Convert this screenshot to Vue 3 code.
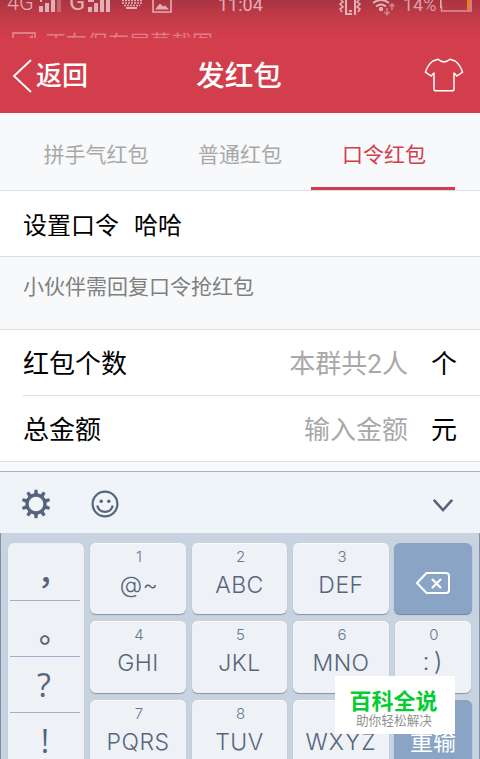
<script setup>
const tabs = ['拼手气红包', '普通红包', '口令红包']
const punctuation = ['，', '。', '?', '!']
const keys = [
  { n: '1', t: '@~', c: 'at' },
  { n: '2', t: 'ABC' },
  { n: '3', t: 'DEF' },
  { icon: true, c: 'blue' },
  { n: '4', t: 'GHI' },
  { n: '5', t: 'JKL' },
  { n: '6', t: 'MNO' },
  { n: '0', t: ':)', c: 'smile' },
  { n: '7', t: 'PQRS' },
  { n: '8', t: 'TUV' },
  { n: '9', t: 'WXYZ', c: 'wide' },
  { t: '重输', c: 'blue redo' },
]
const teeth = Array.from({ length: 10 }, (_, i) => i * 36)
</script>

<template>
  <div class="screen">
    <header class="top">
      <div class="status">
        <span class="st net">4G</span>
        <svg class="overlay" width="480" height="16" viewBox="0 0 480 16">
          <g fill="#e2afb5">
            <path d="M39 6h4v6h-4zM45 3h4v9h-4zM51 0h4v12h-4zM40 0h2v2h-2z" />
            <path d="M57 0h4v12h-4z" opacity=".4" />
            <path d="M88 10h4v2h-4zM94 3h4v9h-4zM100 0h4v12h-4zM106 0h4v12h-4zM88 7h4v5h-4zM88 0h6v2h-6z" />
            <path d="M126 7h11v2h-11z" />
            <path d="M155 9.500l5-6 3 3 2-1 4 4z" />
          </g>
          <path d="M122 .5h20M122 3h20M124 5.500h16" stroke="#e2afb5" stroke-width="1.500" stroke-dasharray="2 1" />
          <path d="M153 -3h18v15h-18z" fill="none" stroke="#e2afb5" stroke-width="1.6" />
          <g fill="none" stroke="#e2afb5" stroke-width="2">
            <path d="M346 0v14h6M355 15V0M349 11h3" />
            <path d="M341 0l2 2-3 2 3 3-3 2 2 3M359 0l-2 2 3 2-3 3 3 2-2 3" stroke-width="1.6" />
            <path d="M373 3q8-6 16 0M376 6.500q5-4 10 0" />
          </g>
          <circle cx="381" cy="9" r="2.2" fill="#e2afb5" />
          <path d="M387 8v6M384.500 12l2.500 2.500 2.500-2.500M392 10V4M389.500 6.500L392 4l2.500 2.500" fill="none" stroke="#d58089" stroke-width="1.6" />
          <path d="M441.500 6v5h29.500V0" fill="none" stroke="#d8929a" stroke-width="1.6" />
          <path d="M440.800 0v8" stroke="#e2afb5" stroke-width="1.600" />
          <path d="M467 0h3.200v10h-3.200z" fill="#e57f2e" />
        </svg>
        <span class="st g">G</span>
        <span class="st time">11:04</span>
        <span class="st pct">14%</span>
      </div>
      <div class="notice">
        <svg width="25" height="22" viewBox="0 0 25 22">
          <path d="M1 20V1h22V20M16 7.500l4-3v5" fill="none" stroke="#e07e88" stroke-width="1.8" />
        </svg>
        <span>正在保存屏幕截图</span>
      </div>
      <nav class="bar">
        <div class="back">
          <svg width="22" height="36" viewBox="0 0 22 36">
            <path d="M20 2L3 18l17 16" fill="none" stroke="#fff" stroke-width="1.9" />
          </svg>
          <span>返回</span>
        </div>
        <h1>发红包</h1>
        <svg class="shirt" width="40" height="36" viewBox="0 0 40 36">
          <path d="M14 2.2Q20 7.5 26 2.2L31 4Q36 7.5 38.6 15.2L33 19l-3-3v16q0 1.8-2 1.8H12q-2 0-2-1.8V16l-3 3-5.600-3.800Q4 7.500 9 4Z" fill="none" stroke="#fff" stroke-width="1.5" stroke-linejoin="round" />
        </svg>
      </nav>
    </header>

    <div class="tabs">
      <div v-for="(t, i) in tabs" :key="t" class="tab" :class="{ active: i === 2 }"><span>{{ t }}</span></div>
    </div>
    <div class="row code"><span>设置口令</span><span>哈哈</span></div>
    <div class="hint">小伙伴需回复口令抢红包</div>
    <div class="group">
      <div class="row"><span>红包个数</span><span class="ph">本群共2人</span><span>个</span></div>
      <div class="row"><span>总金额</span><span class="ph">输入金额</span><span>元</span></div>
    </div>

    <section class="keyboard">
      <div class="tools">
        <svg width="30" height="30" viewBox="-15 -15 30 30">
          <circle r="9" fill="none" stroke="#56657d" stroke-width="3.400" />
          <path v-for="a in teeth" :key="a" d="M-2-10L-1.500-14.300H1.500L2-10Z" fill="#56657d" :transform="`rotate(${a})`" />
        </svg>
        <svg class="face" width="28" height="28" viewBox="0 0 28 28">
          <g fill="none" stroke="#56657d" stroke-width="2.200">
            <circle cx="14" cy="14" r="12.400" />
            <path d="M6.300 15.500c1.500 8.500 13.900 8.500 15.400 0" />
          </g>
          <circle cx="10.200" cy="11.300" r="1.700" fill="#56657d" /><circle cx="17.800" cy="11.300" r="1.700" fill="#56657d" />
        </svg>
        <svg class="down" width="22" height="15" viewBox="0 0 22 15">
          <path d="M1.800 1.800L11 12l9.200-10.200" fill="none" stroke="#56657d" stroke-width="2.600" />
        </svg>
      </div>
      <div class="pad">
        <div class="punct">
          <div v-for="(p, i) in punctuation" :key="p" :class="'p' + i"><span>{{ p }}</span></div>
        </div>
        <div class="keys">
          <div v-for="(k, i) in keys" :key="i" class="key" :class="k.c">
            <small v-if="k.n">{{ k.n }}</small>
            <b v-if="k.t">{{ k.t }}</b>
            <svg v-if="k.icon" width="36" height="24" viewBox="0 0 36 24">
              <path d="M2 12L11.500 2H31q3 0 3 3v14q0 3-3 3H11.500Z" fill="none" stroke="#fff" stroke-width="2" stroke-linejoin="round" />
              <path d="M17 8l9 9M26 8l-9 9" stroke="#fff" stroke-width="2.200" />
            </svg>
          </div>
        </div>
      </div>
    </section>

    <aside class="mark"><strong>百科全说</strong><span>助你轻松解决</span></aside>
  </div>
</template>

<style>
body {
  margin: 0;
  overflow: hidden;
}
</style>

<style scoped>
.screen {
  position: relative;
  width: 480px;
  height: 759px;
  overflow: hidden;
  display: flex;
  flex-direction: column;
  background: #f8f9fb;
  color: #000;
  font-family: Roboto, "Noto Sans CJK SC", sans-serif;
}
.screen > * { flex-shrink: 0; }
svg { display: block; flex: none; }
.top {
  height: 113px;
  background: linear-gradient(#a93441 0, #c03a47 15px, #d23e4b 36px);
}
.status { position: relative; height: 31px; }
.overlay { position: absolute; left: 0; top: 0; }
.st {
  position: absolute;
  font-size: 18px;
  line-height: 20px;
  color: #e2afb5;
  white-space: nowrap;
}
.net { left: 7px; top: -7px; font-size: 21.500px; font-weight: 300; }
.g { left: 69px; top: -8px; font-size: 24px; }
.time { left: 218px; top: -5px; }
.pct { left: 403px; top: -5px; color: #dba0a7; }
.notice {
  height: 7px;
  overflow: hidden;
  display: flex;
  gap: 9px;
  padding-left: 12px;
  color: #e07e88;
  font-size: 21px;
  line-height: 24px;
}
.notice svg { margin-top: 1px; }
.notice span { margin-left: -1px; }
.bar {
  height: 75px;
  display: grid;
  grid-template-columns: 160px 160px 1fr;
  align-items: center;
  color: #fff;
}
.back { display: flex; align-items: center; gap: 3px; padding-left: 11px; font-size: 26px; font-weight: 500; }
.back span { margin-top: -4px; }
h1 { margin: 3px 2px 0 0; text-align: center; font-size: 28.5px; font-weight: 500; line-height: 40px; }
.shirt { justify-self: end; margin: 0 16px 1px 0; }
.tabs {
  height: 77px;
  display: flex;
  padding: 0 25px 0 23px;
  border-bottom: 1px solid #dcdde0;
}
.tab {
  flex: 1;
  display: flex;
  align-items: center;
  justify-content: center;
  padding-top: 6px;
  border-bottom: 3px solid transparent;
  color: #a8a8a8;
  font-size: 21px;
}
.tab span { margin-left: 2px; }
.tab.active { color: #d23e4b; border-color: #d23e4b; }
.row {
  height: 65px;
  display: flex;
  align-items: center;
  background: #fff;
  border-bottom: 1px solid #dcdde0;
  font-size: 26px;
}
.group .row span { margin-top: -2px; }
.code { padding-left: 23px; gap: 15px; font-size: 24px; }
.hint { height: 72px; line-height: 60px; padding-left: 23px; font-size: 21px; color: #808080; }
.group { border-top: 1px solid #dcdde0; border-bottom: 1px solid #dcdde0; background: #fff; padding-left: 23px; }
.group .row { padding-right: 23px; }
.group .row:last-child { border-bottom: 0; }
.ph { margin-left: auto; margin-right: 23px; color: #a8a8a8; }
.keyboard { margin-top: 9px; height: 300px; background: #c8d3df; }
.tools {
  height: 62px;
  border-top: 1px solid #a2b2c2;
  background: #eff4f8;
  display: flex;
  align-items: center;
  padding: 3px 26px 0 21px;
  box-sizing: border-box;
}
.face { margin-left: 40px; }
.down { margin-left: auto; margin-top: 3px; }
.pad {
  display: flex;
  gap: 6px;
  padding: 10px 6px 0 7px;
  border-left: 1px solid #7d90ac;
  border-right: 1px solid #7d90ac;
}
.punct {
  flex: none;
  width: 76px;
  height: 228px;
  box-sizing: border-box;
  padding: 0 4px 0 2px;
  border-radius: 6px;
  background: #eef1f6;
  box-shadow: 0 1px 1px #97a4b3;
  color: #56657d;
  font-size: 32px;
}
.punct div {
  height: 55px;
  border-bottom: 1px solid #a0b2c8;
  display: flex;
  justify-content: center;
  align-items: center;
  line-height: 1;
}
.punct .p0 { height: 57px; font-family: "Noto Sans CJK SC", sans-serif; font-weight: 500; }
.punct .p1 { font-family: "Noto Sans CJK SC", sans-serif; font-weight: 500; font-size: 30px; }
.punct .p0 span { padding-left: 17px; margin-top: -3px; }
.punct .p1 span { padding-left: 18px; }
.punct .p2, .punct .p3 { font-family: "Open Sans", "Noto Sans", sans-serif; }
.punct .p2 span { margin-right: 2px; }
.keys {
  flex: none;
  display: grid;
  grid-template-columns: 96px 95px 96px 77px;
  grid-template-rows: 71px 72px 71px;
  row-gap: 7px;
  column-gap: 6px;
}
.key {
  border-radius: 6px;
  background: #eef1f6;
  box-shadow: 0 1px 1px #8795a8, inset 0 1px #f9fafc;
  color: #56657d;
  display: flex;
  flex-direction: column;
  align-items: center;
}
.key small { margin-top: 5px; font: 300 15px/18px Inter, sans-serif; color: #687790; padding-left: 2px; }
.key b { margin-top: 4px; font: 300 23px/30px Inter, sans-serif; letter-spacing: .5px; }
.wide b { letter-spacing: 1px; }
.at b { padding-left: 2px; }
.smile { margin-right: 1px; }
.smile b { font-size: 25px; letter-spacing: 4px; padding-left: 3px; margin-top: 2px; }
.blue { background: #8aa4c6; box-shadow: 0 1px 1px #6c819f; color: #fff; justify-content: center; margin-left: -1px; }
.blue svg { margin-top: 8px; margin-right: 1px; }
.redo b { font: 400 23px/30px "Noto Sans CJK SC", sans-serif; margin-top: 9px; letter-spacing: 0; }
.mark {
  position: absolute;
  left: 335px;
  top: 676px;
  width: 120px;
  height: 58px;
  background: #fff;
  display: flex;
  flex-direction: column;
  align-items: center;
  font-family: "Noto Sans CJK SC", sans-serif;
}
.mark strong { margin-top: 9px; font-size: 22px; line-height: 28px; color: #06cc34; padding-right: 3px; }
.mark span { font-size: 12.700px; line-height: 14px; color: #929292; padding-right: 2px; }
</style>
